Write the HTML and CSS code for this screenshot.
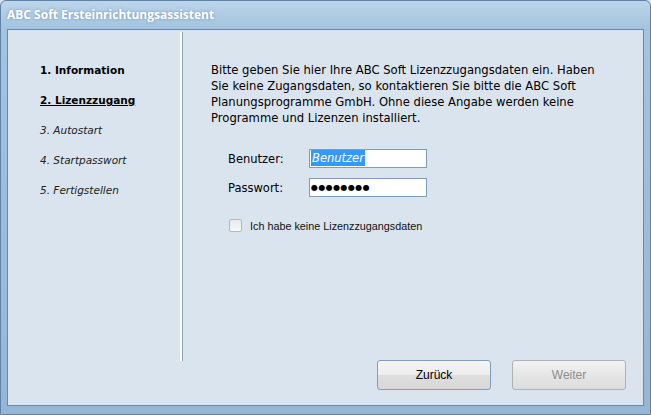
FILE: index.html
```html
<!DOCTYPE html>
<html lang="de">
<head>
  <meta charset="UTF-8">
  <title>ABC Soft Ersteinrichtungsassistent</title>
  <link rel="stylesheet" href="styles.css">
</head>
<body>
  <div class="window">
    <div class="titlebar">ABC Soft Ersteinrichtungsassistent</div>
    <div class="frame">
      <div class="client">
        <ul class="steps">
          <li class="done">1. Information</li>
          <li class="current">2. Lizenzzugang</li>
          <li>3. Autostart</li>
          <li>4. Startpasswort</li>
          <li>5. Fertigstellen</li>
        </ul>
        <div class="divider"></div>
        <div class="main">
          <p class="intro">Bitte geben Sie hier Ihre ABC Soft Lizenzzugangsdaten ein. Haben Sie keine Zugangsdaten, so kontaktieren Sie bitte die ABC Soft Planungsprogramme GmbH. Ohne diese Angabe werden keine Programme und Lizenzen installiert.</p>
          <div class="form">
            <label for="user">Benutzer:</label>
            <div class="field"><span class="selected">Benutzer</span></div>
            <label for="pass">Passwort:</label>
            <div class="field password">&#9679;&#9679;&#9679;&#9679;&#9679;&#9679;&#9679;&#9679;</div>
          </div>
          <label class="check"><span class="box"></span>Ich habe keine Lizenzzugangsdaten</label>
          <div class="buttons">
            <button class="btn">Zurück</button>
            <button class="btn" disabled>Weiter</button>
          </div>
        </div>
      </div>
    </div>
  </div>
</body>
</html>
```

FILE: styles.css
```css
body {
  margin: 0;
  background: #dae4ee;
}
.window {
  width: 651px;
  height: 415px;
  box-sizing: border-box;
  display: flex;
  flex-direction: column;
  border: 1px solid #5f82a8;
  border-radius: 6px 6px 0 0;
  background: linear-gradient(#bcd5ea, #a3c3df 28px, #95b7d5);
}
.titlebar {
  height: 28px;
  line-height: 27px;
  padding-left: 6px;
  font-family: "Open Sans", sans-serif;
  font-size: 12px;
  font-weight: bold;
  color: #fff;
  text-shadow: 0 0 3px rgba(70, 110, 150, 0.6);
}
.frame {
  flex: 1;
  display: flex;
  padding: 0 6px 8px;
}
.client {
  flex: 1;
  display: flex;
  border: 1px solid #6888ad;
  background: #dae4ee;
  font-family: "DejaVu Sans", sans-serif;
  color: #000;
}
.steps {
  list-style: none;
  margin: 0;
  padding: 32px 0 0 32px;
  width: 140px;
  font-size: 10.5px;
}
.steps li {
  height: 30px;
  line-height: 16px;
  font-style: italic;
  color: #222;
}
.steps .done,
.steps .current {
  font-style: normal;
  font-weight: bold;
  color: #000;
}
.steps .current {
  text-decoration: underline;
}
.divider {
  width: 2px;
  margin: 2px 0 44px;
  background: #fff;
  border-right: 1px solid #8fa3b8;
}
.main {
  flex: 1;
  display: flex;
  flex-direction: column;
  padding: 32px 17px 15px 28px;
  font-size: 11.6px;
}
.intro {
  margin: 0 0 23px;
  max-width: 402px;
  line-height: 16px;
}
.form {
  display: grid;
  grid-template-columns: 81px 118px;
  row-gap: 10px;
  align-items: center;
  margin-left: 17px;
  font-size: 11.5px;
}
.field {
  height: 17px;
  border: 1px solid #7f9db9;
  background: #fff;
  line-height: 17px;
  padding-left: 1px;
  box-sizing: content-box;
}
.selected {
  background: #3399ff;
  color: #fff;
  font-style: italic;
  padding: 1px 1px;
}
.password {
  font-size: 8px;
  letter-spacing: 0.4px;
}
.check {
  display: flex;
  align-items: center;
  margin: 22px 0 0 18px;
  font-family: "Liberation Sans", sans-serif;
  font-size: 10.8px;
  color: #111;
}
.box {
  width: 11px;
  height: 11px;
  margin-right: 8px;
  border: 1px solid #b4b9bf;
  border-radius: 2px;
  background: linear-gradient(#e6e8ea, #f6f7f8);
}
.buttons {
  margin-top: auto;
  display: flex;
  justify-content: flex-end;
  gap: 21px;
}
.btn {
  width: 114px;
  height: 30px;
  border: 1px solid #7d9ec0;
  border-radius: 3px;
  background: linear-gradient(#f5f5f5 0%, #ececec 50%, #dedede 51%, #d8d8d8 100%);
  font-family: "Liberation Sans", sans-serif;
  font-size: 12px;
  color: #000;
}
.btn:disabled {
  border-color: #adb2b5;
  background: linear-gradient(#f2f2f2, #e6e6e6 50%, #dcdcdc);
  color: #8d8d8d;
}
```
